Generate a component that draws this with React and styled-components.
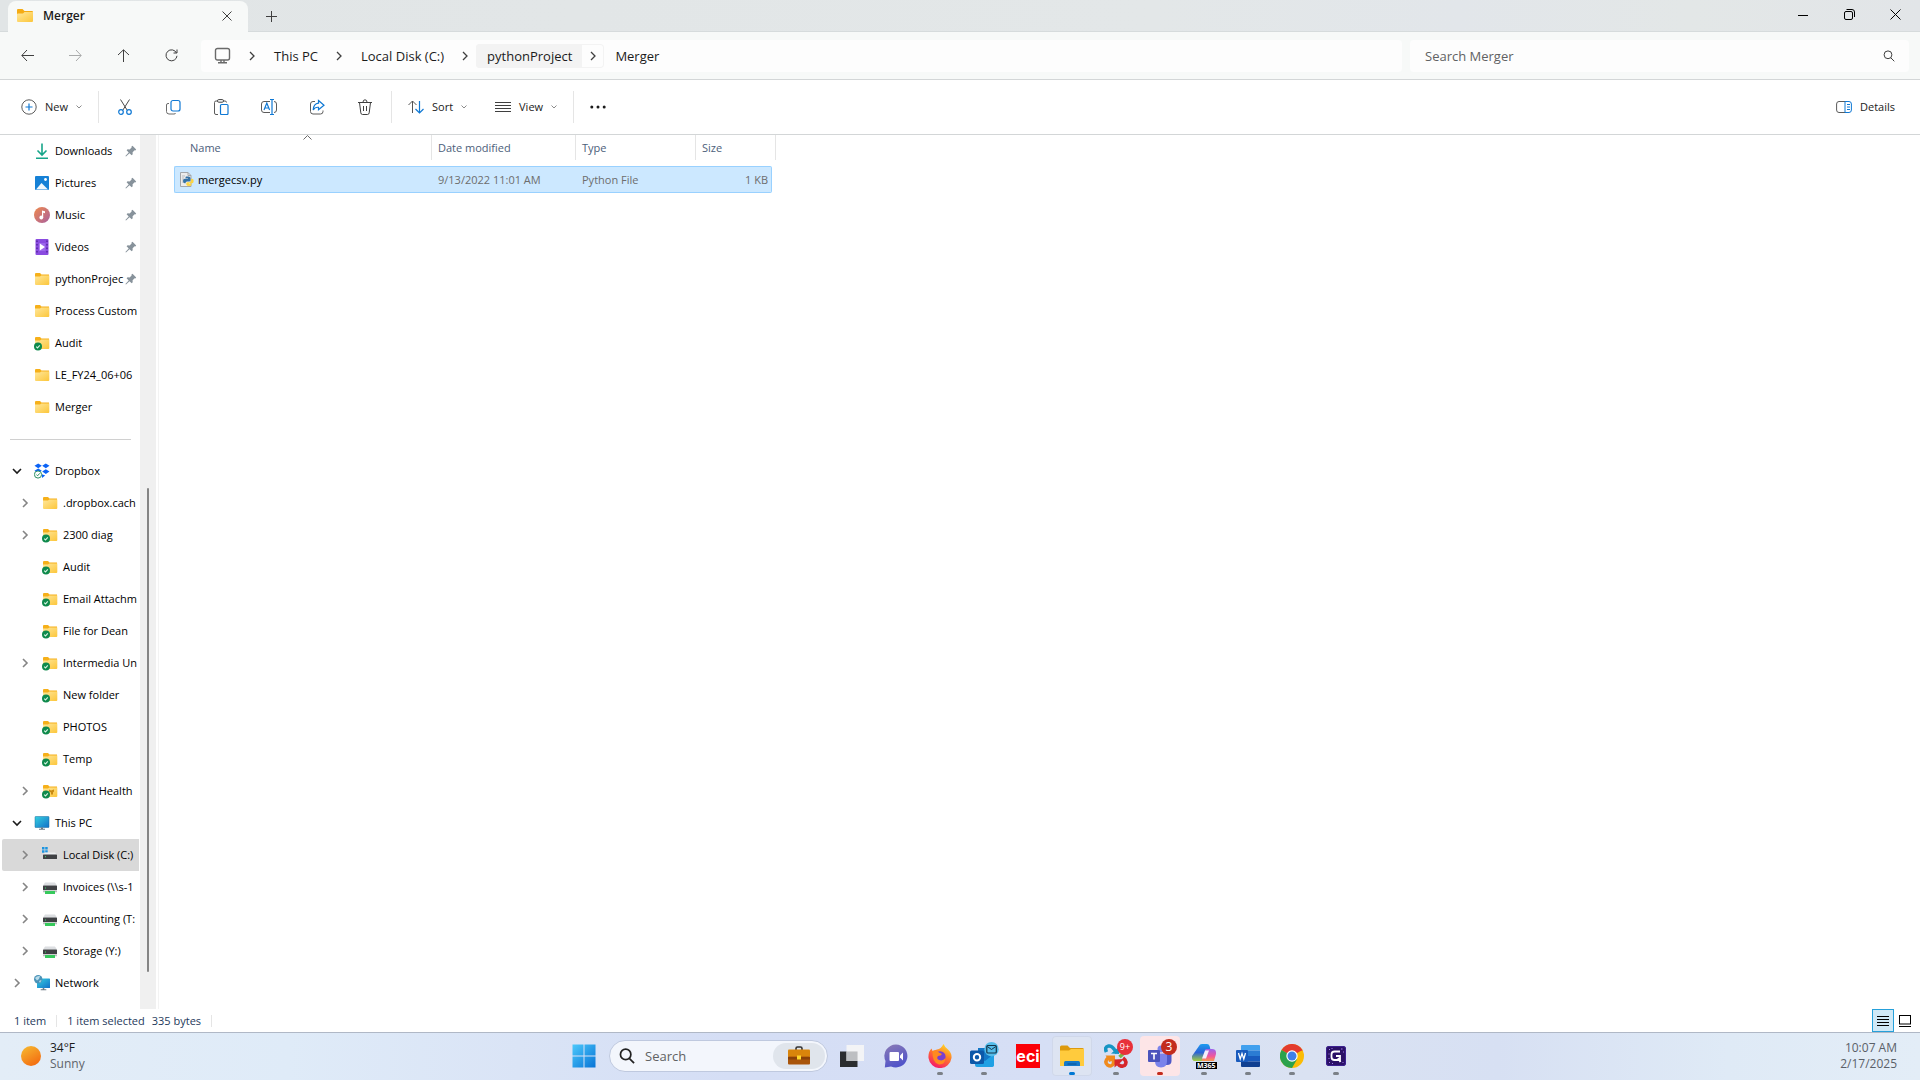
import React from "react";
import styled, { createGlobalStyle, css } from "styled-components";

const Global = createGlobalStyle`
  * { box-sizing: border-box; }
  html, body, #root { height: 100%; margin: 0; }
  body {
    font-family: "Open Sans", "Noto Sans", "Liberation Sans", sans-serif;
    font-size: 11px;
    line-height: 16px;
    color: #1b1b1b;
    background: #fff;
    overflow: hidden;
  }
  button, input { font: inherit; color: inherit; }
`;

const Desktop = styled.div`
  display: flex;
  flex-direction: column;
  height: 100vh;
`;

const PlainButton = styled.button`
  display: inline-flex;
  align-items: center;
  justify-content: center;
  padding: 0;
  border: 0;
  background: transparent;
  white-space: nowrap;
`;

/* ---------- title bar ---------- */

const TitleBar = styled.header`
  display: flex;
  height: 32px;
  padding-left: 8px;
  background: linear-gradient(90deg, #e1e5e6, #e3e7e8 60%, #e2e6ea 76%, #e3e7e7 88%, #e2e5e8);
  border-bottom: 1px solid #d6dbdc;
`;

const Tab = styled.div`
  display: flex;
  align-items: center;
  width: 240px;
  height: 32px;
  margin-top: 1px;
  padding: 0 16px 2px 9px;
  gap: 10px;
  border-radius: 8px 8px 0 0;
  background: #f7f9f8;
  font-size: 12px;
  font-weight: 600;
`;

const TabName = styled.span`
  flex: 1;
`;

const NewTab = styled(PlainButton)`
  width: 46px;
  height: 32px;
`;

const WindowButtons = styled.div`
  display: flex;
  margin-left: auto;
  padding-right: 2px;
`;

const WindowButton = styled(PlainButton)`
  width: 46px;
  height: 29px;
`;

/* ---------- address row ---------- */

const NavRow = styled.nav`
  display: flex;
  align-items: center;
  height: 48px;
  padding: 0 11px 0 3px;
  background: #f7f9f8;
  border-bottom: 1px solid #d3d6d7;
  font-size: 13px;
  line-height: 20px;
`;

const NavButton = styled(PlainButton)`
  width: 48px;
  height: 32px;
`;

const AddressBar = styled.div`
  display: flex;
  align-items: center;
  flex: 1201;
  min-width: 0;
  height: 32px;
  margin-left: 6px;
  border-radius: 4px;
  background: #fdfdfd;
`;

const Place = styled.span`
  display: flex;
  padding: 0 9px 0 13px;
`;

const Crumb = styled.a`
  display: flex;
  align-items: center;
  height: 24px;
  padding: 0 10px 0 11px;
  color: #1b1b1b;
  text-decoration: none;
`;

const CrumbArrow = styled(PlainButton)`
  width: 22px;
  height: 24px;
`;

const HotCrumb = styled.span`
  display: flex;
  border-radius: 4px;
  box-shadow: inset 0 0 0 1px #f3f3f3;
  ${Crumb} { background: #f3f3f3; border-radius: 4px 0 0 4px; }
`;

const SearchField = styled.label`
  display: flex;
  align-items: center;
  flex: 470;
  min-width: 0;
  height: 32px;
  margin-left: 8px;
  padding: 0 14px 0 15px;
  border-radius: 4px;
  background: #fdfdfd;
`;

const SearchInput = styled.input`
  flex: 1;
  min-width: 0;
  padding: 0;
  border: 0;
  outline: 0;
  background: transparent;
  &::placeholder { color: #616263; opacity: 1; }
`;

/* ---------- command bar ---------- */

const CommandBar = styled.div`
  display: flex;
  align-items: center;
  height: 55px;
  padding: 0 11px 0 7px;
  border-bottom: 1px solid #d3d6d7;
  background: #fff;
`;

const IconCommand = styled(PlainButton)`
  width: ${(p) => p.$width || 48}px;
  height: 40px;
`;

const TextCommand = styled(PlainButton)`
  height: 40px;
  padding: 0 14px;
  gap: 8px;
`;

const Divider = styled.span`
  width: 1px;
  height: 32px;
  margin: 0 2px;
  background: #e5e5e5;
`;

const Push = styled.span`
  margin-left: auto;
`;

/* ---------- body ---------- */

const Body = styled.div`
  display: flex;
  flex: 1;
  min-height: 0;
`;

const Sidebar = styled.aside`
  display: flex;
  width: 159px;
  border-right: 1px solid #f3f3f3;
`;

const Tree = styled.ul`
  flex: 1;
  min-width: 0;
  margin: 0;
  padding: 0 1px 0 2px;
  list-style: none;
  overflow: hidden;
`;

const TreeRow = styled.li`
  display: flex;
  align-items: center;
  height: 32px;
  padding-left: ${(p) => 6 + p.$level * 8}px;
  border-radius: 2px 0 0 2px;
  color: #000;
  ${(p) => p.$selected && css`background: #d9d9d9;`}
`;

const Twisty = styled(PlainButton)`
  flex: none;
  width: 18px;
  height: 24px;
  margin-right: 8px;
`;

const TreeLabel = styled.span`
  flex: 1;
  min-width: 0;
  margin-left: 5px;
  white-space: nowrap;
`;

const PinSlot = styled.span`
  display: flex;
  flex: none;
  padding: 0 2px 0 1px;
`;

const TreeRule = styled.li`
  display: flex;
  align-items: center;
  height: 32px;
  padding: 0 8px;
  &::before { content: ""; flex: 1; height: 1px; background: #d0d0d0; }
`;

const ScrollTrack = styled.div`
  display: grid;
  grid-template-rows: 353fr 484fr 37fr;
  justify-content: center;
  width: 16px;
  margin-right: 2px;
  background: #f0f0f0;
`;

const ScrollThumb = styled.div`
  grid-row: 2;
  width: 2px;
  border-radius: 1px;
  background: #858585;
`;

const Files = styled.main`
  flex: 1;
  min-width: 0;
  padding-left: 15px;
`;

const FileTable = styled.table`
  table-layout: fixed;
  width: 602px;
  border-collapse: separate;
  border-spacing: 0;
  tbody::before { content: ""; display: block; height: 6px; }
`;

const HeadCell = styled.th`
  position: relative;
  height: 25px;
  padding: 1px 0 0 ${(p) => p.$inset || 6}px;
  border-right: 1px solid #e5e5e5;
  color: #4c607a;
  font-weight: 400;
  text-align: left;
`;

const SortMark = styled.span`
  position: absolute;
  top: 0;
  left: 50%;
  display: flex;
`;

const FileCell = styled.td`
  height: 27px;
  padding: 0 3px 0 6px;
  border: solid #99d1ff;
  border-width: 1px 0;
  background: #cce8ff;
  color: #6d6d6d;
  text-align: ${(p) => p.$align || "left"};
  &:first-child { border-left-width: 1px; border-radius: 2px 0 0 2px; padding-left: 4px; }
  &:last-child { border-right-width: 1px; border-radius: 0 2px 2px 0; }
`;

const FileName = styled.span`
  display: flex;
  align-items: center;
  gap: 3px;
  color: #000;
`;

/* ---------- status bar ---------- */

const StatusBar = styled.footer`
  display: flex;
  align-items: center;
  height: 23px;
  padding: 0 4px 0 14px;
  color: #1e395b;
`;

const StatusItem = styled.span`
  display: flex;
  align-items: center;
  gap: 7px;
  height: 12px;
  margin-right: 10px;
  padding-right: 10px;
  border-right: 1px solid #e5e5e5;
`;

const ViewSwitch = styled.div`
  display: flex;
  margin-left: auto;
`;

const ViewButton = styled(PlainButton)`
  width: 22px;
  height: 23px;
  ${(p) => p.$on && css`background: #cfe8f6; border: 1px solid #26a0da;`}
`;

/* ---------- taskbar ---------- */

const Taskbar = styled.footer`
  display: grid;
  grid-template-columns: 1fr auto 1fr;
  align-items: center;
  height: 48px;
  border-top: 1px solid #b0b8c6;
  font-size: 12px;
  background: linear-gradient(90deg, #e3edf7 0%, #dfebf8 15%, #dae4f6 27%, #d5def5 38%, #d6dff5 55%, #dae2f2 68%, #d7e0f3 78%, #dfeaf6 90%, #e3edf7 100%);
`;

const Weather = styled(PlainButton)`
  justify-self: start;
  gap: 9px;
  padding-left: 21px;
  padding-bottom: 2px;
`;

const Lines = styled.span`
  display: flex;
  flex-direction: column;
  text-align: ${(p) => p.$align || "left"};
  color: ${(p) => p.$color || "#1b1b1b"};
`;

const Muted = styled.span`
  color: #5e646b;
`;

const Apps = styled.div`
  display: flex;
  align-items: center;
  padding-bottom: 1px;
`;

const AppButton = styled(PlainButton)`
  position: relative;
  width: 40px;
  height: 40px;
  margin: 0 2px;
  border-radius: 4px;
  ${(p) => p.$tone === "open" && css`background: #dde4f2; box-shadow: inset 0 0 0 1px #d0d8ea;`}
  ${(p) => p.$tone === "alert" && css`background: #fde5e7;`}
`;

const RunMark = styled.i`
  position: absolute;
  bottom: 1px;
  left: 17px;
  width: 6px;
  height: 3px;
  border-radius: 2px;
  background: ${(p) => p.$color};
`;

const TaskSearch = styled.label`
  display: flex;
  align-items: center;
  width: 219px;
  height: 32px;
  margin: 0 2px 0 3px;
  padding: 0 2px 0 9px;
  gap: 10px;
  border: 1px solid #bfc9df;
  border-radius: 16px;
  background: #f3f6fc;
  font-size: 13px;
`;

const Highlight = styled.span`
  display: flex;
  align-items: center;
  justify-content: center;
  width: 52px;
  height: 26px;
  border-radius: 13px;
  background: #e0e5ec;
`;

const Clock = styled(PlainButton)`
  justify-self: end;
  padding: 0 23px 2px 0;
`;

/* ---------- icons ---------- */

const Svg = ({ w = 16, h = w, box, children, ...rest }) => (
  <svg width={w} height={h} viewBox={box || `0 0 ${w} ${h}`} fill="none" stroke="#3f3f3f" aria-hidden="true" style={{ flex: "none" }} {...rest}>
    {children}
  </svg>
);

const Chevron = ({ open, color = "#3f3f3f", width = 1.3 }) => (
  <Svg w={10} stroke={color} strokeWidth={width}>
    <path d={open ? "M1 3l4 4 4-4" : "M3 1l4 4-4 4"} />
  </Svg>
);

const Caret = () => (
  <Svg w={6} stroke="#8b8b8b"><path d="M.5 1.5L3 4l2.5-2.5" /></Svg>
);

const Check = () => (
  <g stroke="none">
    <circle cx="4" cy="11.6" r="4" fill="#0f8a4d" />
    <path d="M2.2 11.6l1.3 1.3 2.3-2.5" stroke="#d9f5e3" strokeWidth="1.1" fill="none" />
  </g>
);

const Folder = ({ synced, zip }) => (
  <Svg stroke="none">
    <defs>
      <linearGradient id="fold" x1="0" y1="0" x2="1" y2="1">
        <stop offset="0" stopColor="#ffe79b" /><stop offset="1" stopColor="#fcc63a" />
      </linearGradient>
    </defs>
    <path d="M1 3q0-1 1-1h4l1.5 1.5H15V7H1z" fill="#f6b01a" />
    <path d="M1 5.5h5L7.400 4.500H15.300V13q0 1-1 1H2q-1 0-1-1z" fill="url(#fold)" />
    {zip && <path d="M7 6.500l2 1 3-1v2l-1 1v2H9v-2L7 8.500z" fill="#c98a12" />}
    {synced && <Check />}
  </Svg>
);

const TabFolder = () => (
  <Svg stroke="none">
    <path d="M0 2q0-1 1-1h4.500L7.500 3H15q1 0 1 1v3H0z" fill="#f5ab14" />
    <path d="M0 6.500q0-1 1-1h5L7.500 4H16v9q0 1-1 1H1q-1 0-1-1z" fill="url(#fold)" />
  </Svg>
);

const Download = () => (
  <Svg stroke="#17a589" strokeWidth="1.600"><path d="M8 .5v11M3.500 7.500L8 12l4.500-4.500M2 15.200h12" /></Svg>
);

const Pictures = () => (
  <Svg stroke="none">
    <rect x="1" y="1" width="14" height="14" rx="1" fill="#1681d6" />
    <path d="M2 14.500L7.500 8 14 14.500z" fill="#f1f8fd" />
    <circle cx="11.500" cy="4.500" r="1.400" fill="#fff" />
  </Svg>
);

const Music = () => (
  <Svg stroke="none">
    <defs><linearGradient id="mus" x1="0" y1="0" x2="1" y2="1"><stop offset="0" stopColor="#f08a4b" /><stop offset="1" stopColor="#a9609f" /></linearGradient></defs>
    <circle cx="8" cy="8" r="8" fill="url(#mus)" />
    <path d="M8 3.500l3 .8v2l-1.800-.5v4.700H8z" fill="#fff" /><circle cx="7.300" cy="10.500" r="1.900" fill="#fff" />
  </Svg>
);

const Videos = () => (
  <Svg stroke="none">
    <rect x="1.500" y="0" width="13" height="16" rx="1" fill="#8a4be0" />
    <path d="M5 4h6.500v8H5z" fill="#9d68ea" />
    <path d="M5.800 4.500L11 8l-5.200 3.500z" fill="#fff" />
    <path d="M3 1.500v14M13 1.500v14" stroke="#4f2196" strokeWidth="1.300" strokeDasharray="1.500 2" />
  </Svg>
);

const Pin = () => (
  <Svg w={12} stroke="none">
    <path d="M7.500.8l3.700 3.700-.9.900-.7-.1-2 2 .1 2-1 1L4.500 8.200 1 11.500l-.6-.5 3.300-3.600L1.600 5.300l1-1 2 .1 2-2-.1-.8z" fill="#87929b" />
  </Svg>
);

const DropboxMark = () => (
  <Svg stroke="none">
    <path d="M4.200.5l3.600 2.300-3.600 2.400L.5 2.800zM11.800.5l3.700 2.300-3.700 2.400L8.200 2.800zM11.800 6.200l3.700 2.300-3.700 2.400L8.200 8.500zM4.200 5.500l3.600 2.300L4.200 10.200.5 7.800zM8 11.300l3.200 1.200L8 15z" fill="#0b63f6" />
    <circle cx="4" cy="11.500" r="3.600" fill="#fff" stroke="#2b8f62" />
    <path d="M2.300 11.500l1.300 1.300 2.200-2.500" stroke="#2b8f62" fill="none" />
  </Svg>
);

const Monitor = () => (
  <Svg stroke="none">
    <defs><linearGradient id="mon" x1="0" y1="0" x2="1" y2="1"><stop offset="0" stopColor="#35d0e0" /><stop offset="1" stopColor="#1270c8" /></linearGradient></defs>
    <rect x="1" y="1.500" width="14" height="11" rx=".6" fill="url(#mon)" stroke="#1b6a9e" strokeWidth=".5" />
    <path d="M7 12.500h2v1.300h2v1H5v-1h2z" fill="#6c7a84" />
  </Svg>
);

const LocalDisk = () => (
  <Svg stroke="none">
    <path d="M0 0h2.500v2.500H0zM3.200 0h2.500v2.500H3.200zM0 3.200h2.500v2.500H0zM3.200 3.200h2.500v2.500H3.200z" fill="#1b94e0" />
    <path d="M3 5.500h10l2 2.500H1z" fill="#eceef0" />
    <rect x="1" y="7.500" width="14" height="4.500" rx=".6" fill="#3f4144" />
    <path d="M3 9.700h1" stroke="#39e36a" />
  </Svg>
);

const NetDisk = () => (
  <Svg stroke="none">
    <path d="M3 3.500h10l2 3H1z" fill="#dcdee1" />
    <rect x="1" y="6.500" width="14" height="4.800" rx=".6" fill="#3f4144" />
    <path d="M3 9h1" stroke="#39e36a" />
    <path d="M3 12h10v3H3z" fill="#37c95c" /><path d="M1 12h2v1.300H1zM13 12h2v1.300h-2z" fill="#b9bdc0" />
  </Svg>
);

const Network = () => (
  <Svg stroke="none">
    <rect x="3" y="3.500" width="13" height="9.500" rx=".6" fill="url(#mon)" />
    <path d="M8.700 13h1.600v1.300h2v1H6.700v-1h2z" fill="#6c7a84" />
    <circle cx="4.200" cy="4.200" r="4.200" fill="#4c93b8" />
    <path d="M1 3q2-2.500 5-2L5 4 3 5.500zM5 6l2.500-1-1.500 3z" fill="#b9dcea" />
  </Svg>
);

const PythonFile = () => (
  <Svg stroke="none">
    <path d="M1.500.5h7.500l3 3v11H1.500z" fill="#ececec" stroke="#a3a6a9" />
    <path d="M9 .5v3h3" stroke="#a3a6a9" />
    <path d="M3 4h3M3 6h2M3 8h1.500M3 10h1.500" stroke="#b9bcbe" />
    <path d="M7 4.500h2.500q2 0 2 1.800v2q0 1.200-1.300 1.200H8q-1.500 0-1.500 1.700H5.800Q4 11.200 4 9t1.800-2.200H9V6.300H6.500Q6.500 4.700 7 4.500z" fill="#3672a5" />
    <path d="M12 6.800h.8q1.900 0 1.900 2.300t-1.900 2.300H9.800v.5h2.800q0 2.200-2.500 2.200T7.300 12.500v-1q0-1.300 1.300-1.300h2Q12 10.200 12 8.500z" fill="#fbd545" />
  </Svg>
);

const Blue = "#0f78d4";

const Cut = () => (
  <Svg w={16} stroke="#4a4a4a">
    <path d="M3.500.5l6.700 10.700M12.500.5L5.800 11.200" />
    <g stroke={Blue} strokeWidth="1.200"><circle cx="4" cy="13" r="2.300" /><circle cx="12" cy="13" r="2.300" /></g>
  </Svg>
);
const Copy = () => (
  <Svg>
    <path d="M4 4.500H3q-1.500 0-1.500 1.500v6.500Q1.500 15 4 15h5q1.500 0 1.500-1" stroke="#6b6b6b" />
    <rect x="6" y="1.500" width="9" height="10.500" rx="2" stroke={Blue} strokeWidth="1.200" />
  </Svg>
);
const Paste = () => (
  <Svg>
    <path d="M5 15.500H3q-1.500 0-1.500-1.500V3.500Q1.500 2 3 2h1.500M10.500 2H12q1.500 0 1.500 1.500" stroke="#5b5b5b" />
    <rect x="4.500" y=".6" width="6" height="2.600" rx="1.200" />
    <rect x="7.500" y="5.500" width="7.500" height="10" rx="1" stroke={Blue} strokeWidth="1.200" />
  </Svg>
);
const Rename = () => (
  <Svg>
    <path d="M9 2.500H3Q.5 2.500.5 5v6q0 2.500 2.500 2.500h6M13 2.500q2.500 0 2.500 2.500v6q0 2.500-2.500 2.500" stroke="#5b5b5b" />
    <path d="M11 .5v15M9 .5h4M9 15.500h4M3 11l2.800-7 2.800 7M4 9h3.600" stroke={Blue} strokeWidth="1.200" />
  </Svg>
);
const Share = () => (
  <Svg>
    <path d="M6 2.500H4Q1.500 2.500 1.500 5v7.500Q1.500 15 4 15h7.500q2.500 0 2.500-2.500V11.500" stroke="#5b5b5b" />
    <path d="M9.500 1.500L15 6.300l-5.500 4.500V8.300Q6 8 4.200 11 4.500 4.800 9.500 4.200z" stroke={Blue} strokeWidth="1.200" />
  </Svg>
);
const Trash = () => (
  <Svg>
    <path d="M1 3.500h14M2.500 3.500l1.300 10.300q.2 1.700 1.700 1.700h5q1.500 0 1.700-1.700L13.500 3.500M6 3.200Q6 .8 8 .8t2 2.400M6.500 7v5M9.500 7v5" />
  </Svg>
);
const Sort = () => (
  <Svg><path d="M4.500 14V2M.5 6l4-4 4 4" stroke="#555" /><path d="M11.500 2v12M7.500 10l4 4 4-4" stroke={Blue} strokeWidth="1.200" /></Svg>
);
const ViewLines = () => (<Svg><path d="M0 3.500h16M0 6.500h16M0 9.500h16M0 12.500h16" /></Svg>);
const Details = () => (
  <Svg>
    <path d="M9 2.500H3Q.6 2.500.6 5v6q0 2.500 2.400 2.500h6" stroke="#5b5b5b" />
    <path d="M9 2.500h4q2.400 0 2.400 2.500v6q0 2.500-2.400 2.500H9zM11 5.500h3M11 8h3M11 10.500h3" stroke={Blue} />
  </Svg>
);

const Magnifier = ({ size = 12, color = "#3f3f3f", width = 1 }) => (
  <Svg w={size} box="0 0 12 12" stroke={color} strokeWidth={width}><circle cx="5" cy="4.800" r="3.900" /><path d="M7.700 7.700l3.600 3.600" /></Svg>
);

const WinLogo = () => (
  <Svg w={24} stroke="none">
    <defs><linearGradient id="win" x1="0" y1="0" x2="1" y2="1"><stop offset="0" stopColor="#4cc8fb" /><stop offset="1" stopColor="#0874d6" /></linearGradient></defs>
    <path d="M.5.5h11v11H.5zM12.500.5h11v11h-11zM.5 12.500h11v11H.5zM12.500 12.500h11v11h-11z" fill="url(#win)" />
  </Svg>
);

const Briefcase = () => (
  <Svg w={22} h={20} stroke="none">
    <path d="M8 4V2.500Q8 1 9.500 1h3Q14 1 14 2.500V4" stroke="#333" strokeWidth="1.600" />
    <rect x="0" y="3.500" width="22" height="8" rx="1" fill="#d9850b" />
    <rect x="0" y="10.500" width="22" height="8" rx="1" fill="#a9550b" />
    <path d="M0 11h22v2.500H0z" fill="#8b4208" />
    <rect x="9" y="9.500" width="4" height="4" fill="#ffd82a" />
  </Svg>
);

const TaskViewIcon = () => (
  <Svg w={24} stroke="none">
    <path d="M0 7.500h17.500V23H0z" fill="#2b2d2f" />
    <path d="M6.500 1H24v16H6.500z" fill="#f4f4f6" opacity=".95" />
    <path d="M6.500 7.500h11V17h-11z" fill="#bdbfc2" />
  </Svg>
);

const ChatIcon = () => (
  <Svg w={24} stroke="none">
    <defs><linearGradient id="chat" x1="0" y1="0" x2=".4" y2="1"><stop offset="0" stopColor="#8b7bb5" /><stop offset="1" stopColor="#5154c9" /></linearGradient></defs>
    <path d="M12 .5a11.500 11.500 0 1 1-5 21.900L.8 23.500 1.500 17A11.500 11.500 0 0 1 12 .5z" fill="url(#chat)" />
    <rect x="5.500" y="8" width="9.500" height="9" rx="1" fill="#fff" /><path d="M16 11.500L19 8.500v8l-3-3z" fill="#fff" />
  </Svg>
);

const Firefox = () => (
  <Svg w={24} stroke="none">
    <defs><linearGradient id="ff" x1=".8" y1="0" x2=".3" y2="1"><stop offset="0" stopColor="#ffe226" /><stop offset=".45" stopColor="#ff7a2a" /><stop offset="1" stopColor="#f5166a" /></linearGradient></defs>
    <path d="M15.500 0Q17 3.500 20 5.500 24 9 23.500 14A11.600 11.600 0 0 1 .5 14Q0 8 3.500 4.500L4.500 7 9 5.500Q13 5 15.500 0z" fill="url(#ff)" />
    <circle cx="12" cy="12.800" r="5.600" fill="#7a3fd0" />
    <path d="M4.500 7Q8 5.500 11 8.500L14 10q-1 2-4 2-2 2.500 1 4 4 1.500 6.500-2Q17 21 11 20.500 4 19 4.500 7z" fill="#ff8a1f" />
  </Svg>
);

const Outlook = () => (
  <Svg w={30} h={28} stroke="none">
    <path d="M9 6h13l3 5v11q0 2-2 2H9z" fill="#1377c6" />
    <path d="M25 12v10q0 3-3 3H11l14-13z" fill="#37b7ee" /><path d="M6 14l10 5 9-7v11q0 2-2 2H8q-2 0-2-2z" fill="#1fa0e4" />
    <rect x="1" y="8.500" width="14" height="13.500" rx="1.500" fill="#0c58a8" />
    <circle cx="8" cy="15.200" r="3.200" stroke="#fff" strokeWidth="2" />
    <circle cx="22.500" cy="7.200" r="7.200" fill="#54bce9" />
    <rect x="17.800" y="3.500" width="9.500" height="7.500" rx="1" stroke="#14354a" strokeWidth="1.200" /><path d="M18.300 4.500l4.200 3 4.300-3" stroke="#14354a" />
  </Svg>
);

const Eci = styled.span`
  width: 24px;
  height: 24px;
  background: #fb0007;
  color: #fff;
  font: 700 16px/24px "Inter", sans-serif;
  text-align: center;
`;

const Explorer = () => (
  <Svg w={24} h={22} stroke="none">
    <path d="M0 2q0-1.500 1.500-1.500h6L10 3h12.500Q24 3 24 4.500V9H0z" fill="#dd9a0d" />
    <path d="M0 5.500h9L11 4h13v17H0z" fill="#ffcb3d" />
    <path d="M4 21v-3.500Q4 16 5.500 16h13q1.500 0 1.500 1.500V21z" fill="#1579c9" /><path d="M7.500 19h9" stroke="#0c5192" />
  </Svg>
);

const Arrows = () => (
  <Svg w={24} strokeWidth="3.600">
    <path d="M2.500 8Q0 3 4.500 2 7.500 1.500 10 5l3 4" stroke="#1795c4" /><path d="M20 9l-4.500 4" stroke="#7cb342" />
    <path d="M4 14Q0 18 3.500 21q4 2.500 6-1.500V15" stroke="#f08a1d" /><path d="M1.500 11.500H11V20l-3-3-3 1-1-3z" fill="#f08a1d" stroke="none" />
    <path d="M19 14q5 4 1.500 7.500-4 2-6.500-1.500" stroke="#d6262b" /><path d="M10.500 23.500V15.500L20 15l-3 3z" fill="#d6262b" stroke="none" />
    <path d="M7 9.500l8 .5V3z" fill="#1795c4" stroke="none" />
  </Svg>
);

const Badge = styled.span`
  position: absolute;
  top: ${(p) => p.$top}px;
  left: ${(p) => p.$left}px;
  width: 16px;
  height: 16px;
  border-radius: 8px;
  background: ${(p) => p.$color};
  color: #fff;
  font-size: ${(p) => p.$size}px;
  line-height: 16px;
  text-align: center;
`;

const Teams = () => (
  <Svg w={24} stroke="none">
    <circle cx="13" cy="5" r="3.500" fill="#7b83eb" /><circle cx="20.500" cy="7" r="2.500" fill="#5059c9" />
    <path d="M15 10h8.500v7q0 4-4.500 4h-3z" fill="#5059c9" /><path d="M7 9.500h12V17q0 6.500-6 6.500T7 17z" fill="#7b83eb" />
    <rect x="0" y="6" width="12" height="12" rx="1" fill="#4b53bc" />
    <path d="M3 9.500h6M6 9.500v6" stroke="#fff" strokeWidth="1.600" />
  </Svg>
);

const CopilotIcon = () => (
  <Svg w={24} stroke="none">
    <defs>
      <linearGradient id="cpa" x1="0" y1="0" x2="0" y2="1"><stop offset="0" stopColor="#1c9cf0" /><stop offset=".5" stopColor="#2a62d8" /><stop offset="1" stopColor="#a5cf3c" /></linearGradient>
      <linearGradient id="cpb" x1="0" y1="0" x2="0" y2="1"><stop offset="0" stopColor="#9a62f0" /><stop offset=".6" stopColor="#f2569b" /><stop offset="1" stopColor="#f89a4c" /></linearGradient>
    </defs>
    <path d="M7 2q.6-2 3-2h5q2 0 2.600 2l.7 3H14L10.500 17H3q-3.500 0-3-5z" fill="url(#cpa)" />
    <path d="M14 5h6q4.500 0 4 5l-2 7H9.500z" fill="url(#cpb)" /><path d="M13 6.500h4l-3 8h-4z" fill="#f3eefb" />
  </Svg>
);

const Tag = styled.span`
  position: absolute;
  left: 12px;
  bottom: 7px;
  padding: 0 1px;
  background: #000;
  color: #fff;
  font-size: 7px;
  font-weight: 700;
  line-height: 7px;
`;

const Word = () => (
  <Svg w={24} stroke="none">
    <path d="M6 1h17q1 0 1 1v4.500H5V2q0-1 1-1z" fill="#41a0ee" /><path d="M5 6.500h19V12H5z" fill="#2b7cd3" />
    <path d="M5 12h19v5.500H5z" fill="#185abd" /><path d="M5 17.500h19V22q0 1-1 1H6q-1 0-1-1z" fill="#103f91" />
    <rect x="0" y="6" width="12" height="12" rx="1" fill="#185abd" />
    <path d="M2.500 9l1.700 6L6 9.500 7.800 15l1.700-6" stroke="#fff" strokeWidth="1.300" />
  </Svg>
);

const Chrome = () => (
  <Svg w={24} stroke="none">
    <circle cx="12" cy="12" r="12" fill="#fbbc05" />
    <path d="M12 12L1.600 6a12 12 0 0 1 20.800 0z" fill="#e33b2e" /><path d="M12 12L1.600 6A12 12 0 0 0 12 24l5.200-9z" fill="#2ba24c" />
    <path d="M12 6.500h10.700L22.400 6H12z" fill="#e33b2e" />
    <circle cx="12" cy="12" r="5.700" fill="#fff" /><circle cx="12" cy="12" r="4.500" fill="#3f7fe8" />
  </Svg>
);

const Gapp = () => (
  <Svg w={20} stroke="none">
    <rect width="20" height="20" rx="3" fill="#2b1166" />
    <rect x=".5" y=".5" width="19" height="19" rx="2.500" stroke="#3d2192" />
    <path d="M3 3.500h1M5.500 2.500h1M15 3h1.500M3 16.500h1M16.500 16.500h1M2.500 8h1M17 6h1M2.500 12.500h1M6 17.500h1" stroke="#a37bf0" />
    <path d="M14 5.500H8.500Q5.500 5.500 5.500 8.500v2.500q0 3 3 3H14V10h-4M12 12l2.500 4" stroke="#fff" strokeWidth="1.800" />
  </Svg>
);

/* ---------- data ---------- */

const quick = [
  ["Downloads", <Download />, true],
  ["Pictures", <Pictures />, true],
  ["Music", <Music />, true],
  ["Videos", <Videos />, true],
  ["pythonProjec", <Folder />, true],
  ["Process Custom", <Folder />],
  ["Audit", <Folder synced />],
  ["LE_FY24_06+06", <Folder />],
  ["Merger", <Folder />],
].map(([label, icon, pinned]) => ({ label, icon, pinned, level: 0 }));

const tree = [
  { label: "Dropbox", icon: <DropboxMark />, level: 0, twisty: "open" },
  { label: ".dropbox.cach", icon: <Folder />, level: 1, twisty: "closed" },
  { label: "2300 diag", icon: <Folder synced />, level: 1, twisty: "closed" },
  { label: "Audit", icon: <Folder synced />, level: 1 },
  { label: "Email Attachm", icon: <Folder synced />, level: 1 },
  { label: "File for Dean", icon: <Folder synced />, level: 1 },
  { label: "Intermedia Un", icon: <Folder synced />, level: 1, twisty: "closed" },
  { label: "New folder", icon: <Folder synced />, level: 1 },
  { label: "PHOTOS", icon: <Folder synced />, level: 1 },
  { label: "Temp", icon: <Folder synced />, level: 1 },
  { label: "Vidant Health", icon: <Folder synced zip />, level: 1, twisty: "closed" },
  { label: "This PC", icon: <Monitor />, level: 0, twisty: "open" },
  { label: "Local Disk (C:)", icon: <LocalDisk />, level: 1, twisty: "closed", selected: true },
  { label: "Invoices (\\\\s-1", icon: <NetDisk />, level: 1, twisty: "closed" },
  { label: "Accounting (T:", icon: <NetDisk />, level: 1, twisty: "closed" },
  { label: "Storage (Y:)", icon: <NetDisk />, level: 1, twisty: "closed" },
  { label: "Network", icon: <Network />, level: 0, twisty: "closed" },
];

const grey = "#7b8087";
const apps = [
  { name: "Task view", icon: <TaskViewIcon /> },
  { name: "Chat", icon: <ChatIcon /> },
  { name: "Firefox", icon: <Firefox />, mark: grey },
  { name: "Outlook", icon: <Outlook />, mark: grey },
  { name: "eci", icon: <Eci>eci</Eci> },
  { name: "File Explorer", icon: <Explorer />, mark: "#0078d4", tone: "open" },
  { name: "Connect", icon: <Arrows />, mark: grey, extra: <Badge $top={3} $left={21} $color="#e8303a" $size={9}>9+</Badge> },
  { name: "Teams", icon: <Teams />, mark: "#c42b1c", tone: "alert", extra: <Badge $top={3} $left={21} $color="#c42b1c" $size={12}>3</Badge> },
  { name: "Microsoft 365", icon: <CopilotIcon />, mark: grey, extra: <Tag>M365</Tag> },
  { name: "Word", icon: <Word />, mark: grey },
  { name: "Chrome", icon: <Chrome />, mark: grey },
  { name: "G", icon: <Gapp />, mark: grey },
];

function TreeItem({ item }) {
  return (
    <TreeRow $level={item.level} $selected={item.selected}>
      <Twisty aria-label={`Expand ${item.label}`}>
        {item.twisty && <Chevron open={item.twisty === "open"} color={item.twisty === "open" ? "#1b1b1b" : "#858585"} width={1.6} />}
      </Twisty>
      {item.icon}
      <TreeLabel>{item.label}</TreeLabel>
      {item.pinned && <PinSlot><Pin /></PinSlot>}
    </TreeRow>
  );
}

export default function App() {
  return (
    <Desktop>
      <Global />
      <TitleBar>
        <Tab>
          <TabFolder />
          <TabName>Merger</TabName>
          <PlainButton aria-label="Close tab"><Svg w={10}><path d="M.5.5l9 9M9.500.5l-9 9" /></Svg></PlainButton>
        </Tab>
        <NewTab aria-label="New tab"><Svg w={11}><path d="M5.500 0v11M0 5.500h11" /></Svg></NewTab>
        <WindowButtons>
          <WindowButton aria-label="Minimize"><Svg w={10} stroke="#000"><path d="M0 5.500h10" /></Svg></WindowButton>
          <WindowButton aria-label="Restore">
            <Svg w={11} stroke="#000"><rect x=".5" y="2.500" width="8" height="8" rx="1.500" /><path d="M2.500.5H8q2.500 0 2.500 2.500v5" /></Svg>
          </WindowButton>
          <WindowButton aria-label="Close"><Svg w={11} stroke="#000"><path d="M.5.5l10 10M10.500.5l-10 10" /></Svg></WindowButton>
        </WindowButtons>
      </TitleBar>

      <NavRow>
        <NavButton aria-label="Back"><Svg w={13}><path d="M13 6.500H1M6 1L.8 6.500 6 12" /></Svg></NavButton>
        <NavButton aria-label="Forward"><Svg w={13} stroke="#a9abab"><path d="M0 6.500h12M7 1l5.200 5.500L7 12" /></Svg></NavButton>
        <NavButton aria-label="Up"><Svg w={13}><path d="M6.500 13V1M1 6L6.500.8 12 6" /></Svg></NavButton>
        <NavButton aria-label="Refresh"><Svg w={13}><path d="M11.500 4A5.500 5.500 0 1 0 12 6.800M12 .5V4H8.500" /></Svg></NavButton>
        <AddressBar>
          <Place>
            <Svg w={18} stroke="#6a6a6a" strokeWidth="1.400"><rect x="1.500" y="1.500" width="14" height="11.500" rx="2" /><path d="M7 13v2.500M10 13v2.500M4 15.800h9" /></Svg>
          </Place>
          <CrumbArrow aria-label="Locations"><Chevron /></CrumbArrow>
          <Crumb href="#pc">This PC</Crumb>
          <CrumbArrow aria-label="This PC folders"><Chevron /></CrumbArrow>
          <Crumb href="#c">Local Disk (C:)</Crumb>
          <CrumbArrow aria-label="Local Disk folders"><Chevron /></CrumbArrow>
          <HotCrumb>
            <Crumb href="#project">pythonProject</Crumb>
            <CrumbArrow aria-label="pythonProject folders"><Chevron /></CrumbArrow>
          </HotCrumb>
          <Crumb href="#merger">Merger</Crumb>
        </AddressBar>
        <SearchField>
          <SearchInput type="text" placeholder="Search Merger" aria-label="Search Merger" />
          <Magnifier />
        </SearchField>
      </NavRow>

      <CommandBar>
        <TextCommand>
          <Svg w={16}><circle cx="8" cy="8" r="7.200" stroke="#5b5b5b" /><path d="M8 4.500v7M4.500 8h7" stroke={Blue} strokeWidth="1.200" /></Svg>
          New<Caret />
        </TextCommand>
        <Divider />
        <IconCommand aria-label="Cut"><Cut /></IconCommand>
        <IconCommand aria-label="Copy"><Copy /></IconCommand>
        <IconCommand aria-label="Paste"><Paste /></IconCommand>
        <IconCommand aria-label="Rename"><Rename /></IconCommand>
        <IconCommand aria-label="Share"><Share /></IconCommand>
        <IconCommand aria-label="Delete"><Trash /></IconCommand>
        <Divider />
        <TextCommand><Sort />Sort<Caret /></TextCommand>
        <TextCommand><ViewLines />View<Caret /></TextCommand>
        <Divider />
        <IconCommand aria-label="See more" $width={44}>
          <Svg stroke="none" fill="#1b1b1b"><circle cx="1.800" cy="8" r="1.500" /><circle cx="8" cy="8" r="1.500" /><circle cx="14.200" cy="8" r="1.500" /></Svg>
        </IconCommand>
        <Push />
        <TextCommand><Details />Details</TextCommand>
      </CommandBar>

      <Body>
        <Sidebar>
          <Tree>
            {quick.map((item) => <TreeItem key={item.label} item={item} />)}
            <TreeRule />
            {tree.map((item) => <TreeItem key={item.label} item={item} />)}
          </Tree>
          <ScrollTrack><ScrollThumb /></ScrollTrack>
        </Sidebar>
        <Files>
          <FileTable>
            <colgroup><col width="258" /><col width="144" /><col width="120" /><col width="76" /><col width="4" /></colgroup>
            <thead>
              <tr>
                <HeadCell $inset={16}>Name<SortMark><Svg w={9} h={5} stroke="#6b6b6b"><path d="M.5 4.500l4-4 4 4" /></Svg></SortMark></HeadCell>
                <HeadCell>Date modified</HeadCell>
                <HeadCell>Type</HeadCell>
                <HeadCell colSpan={2}>Size</HeadCell>
              </tr>
            </thead>
            <tbody>
              <tr>
                <FileCell><FileName><PythonFile />mergecsv.py</FileName></FileCell>
                <FileCell>9/13/2022 11:01 AM</FileCell>
                <FileCell>Python File</FileCell>
                <FileCell $align="right">1 KB</FileCell>
              </tr>
            </tbody>
          </FileTable>
        </Files>
      </Body>

      <StatusBar>
        <StatusItem>1 item</StatusItem>
        <StatusItem><span>1 item selected</span><span>335 bytes</span></StatusItem>
        <ViewSwitch>
          <ViewButton $on aria-label="Details view"><Svg w={12} stroke="#000"><path d="M0 1.500h12M0 4.500h12M0 7.500h12M0 10.500h12" /></Svg></ViewButton>
          <ViewButton aria-label="Thumbnail view"><Svg w={12} stroke="#000"><rect x=".5" y=".5" width="11" height="8.500" /><path d="M0 11.500h12" /></Svg></ViewButton>
        </ViewSwitch>
      </StatusBar>

      <Taskbar>
        <Weather>
          <Svg w={20} stroke="none">
            <defs><linearGradient id="sun" x1=".2" y1="0" x2=".8" y2="1"><stop offset="0" stopColor="#f6b62f" /><stop offset="1" stopColor="#f3680f" /></linearGradient></defs>
            <circle cx="10" cy="10" r="10" fill="url(#sun)" />
          </Svg>
          <Lines><span>34°F</span><Muted>Sunny</Muted></Lines>
        </Weather>
        <Apps>
          <AppButton aria-label="Start"><WinLogo /></AppButton>
          <TaskSearch>
            <Magnifier size={16} color="#222" width={1.3} />
            <SearchInput type="text" placeholder="Search" aria-label="Search" />
            <Highlight><Briefcase /></Highlight>
          </TaskSearch>
          {apps.map((app) => (
            <AppButton key={app.name} aria-label={app.name} $tone={app.tone}>
              {app.icon}
              {app.extra}
              {app.mark && <RunMark $color={app.mark} />}
            </AppButton>
          ))}
        </Apps>
        <Clock><Lines $align="right" $color="#5a6068"><span>10:07 AM</span><span>2/17/2025</span></Lines></Clock>
      </Taskbar>
    </Desktop>
  );
}
